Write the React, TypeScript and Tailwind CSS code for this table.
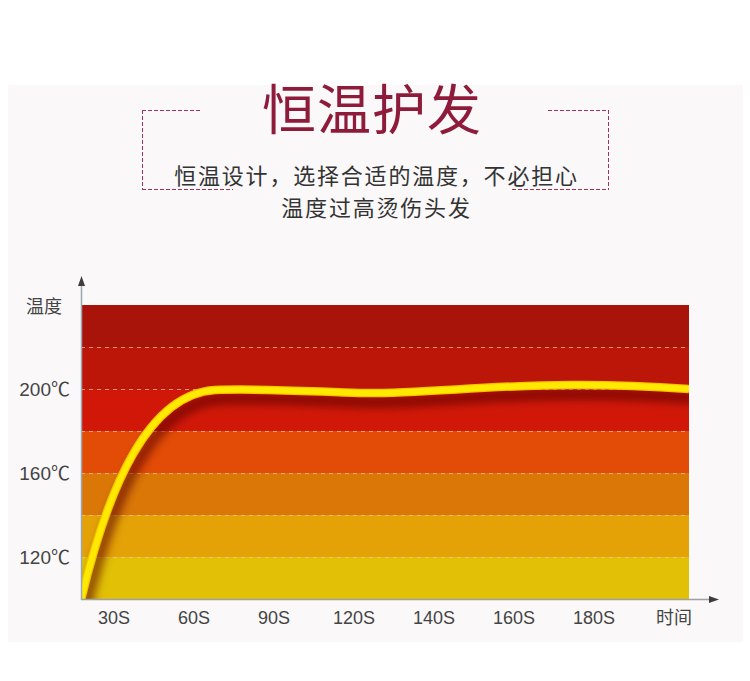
import React from "react";

const bands = ["#a9140a", "#bc1608", "#d11808", "#e24c06", "#da7707", "#e4a207", "#e2c006"];
const xLabels = ["30S", "60S", "90S", "120S", "140S", "160S", "180S", "时间"];

const curve =
  "M81 598 C108 485, 148 392, 215 388 C260 386, 320 390, 360 391 C420 392, 500 382, 580 383 C620 383, 660 385, 689 387";

function Chart() {
  const top = 303;
  const h = 42;
  return (
    <svg width="660" height="334" viewBox="74 270 660 334" className="block">
      <defs>
        <filter id="sh" x="-10%" y="-20%" width="120%" height="140%">
          <feGaussianBlur stdDeviation="4" />
        </filter>
        <clipPath id="plot">
          <rect x="81" y={top} width="608" height={h * 7} />
        </clipPath>
      </defs>
      {bands.map((c, i) => (
        <rect key={i} x="81" y={top + i * h} width="608" height={h} fill={c} />
      ))}
      {[1, 2, 3, 4, 5, 6].map((i) => (
        <line
          key={i}
          x1="81"
          x2="689"
          y1={top + i * h + 0.5}
          y2={top + i * h + 0.5}
          stroke="#f4c0a8"
          strokeOpacity="0.75"
          strokeWidth="1"
          strokeDasharray="4 4"
        />
      ))}
      <g clipPath="url(#plot)">
        <path d={curve} transform="translate(4 9)" fill="none" stroke="#5a0000" strokeOpacity="0.6" strokeWidth="12" filter="url(#sh)" />
        <path d={curve} fill="none" stroke="#f2c400" strokeWidth="8.5" strokeLinecap="butt" />
        <path d={curve} fill="none" stroke="#ffe900" strokeWidth="6" strokeLinecap="butt" />
      </g>
      {/* y axis */}
      <line x1="81.5" y1="282" x2="81.5" y2="598" stroke="#9aa6b0" strokeWidth="1.5" />
      <path d="M81.5 274 L78 284 L85 284 Z" fill="#3d3d3d" />
      {/* x axis */}
      <line x1="81" y1="597.5" x2="712" y2="597.5" stroke="#a0a0a0" strokeWidth="1.5" />
      <path d="M719 597.5 L709 594 L709 601 Z" fill="#3d3d3d" />
    </svg>
  );
}

function Dash({ className }: { className: string }) {
  return <div className={"absolute " + className} />;
}

export default function App() {
  const font = { fontFamily: '"Liberation Sans", "Noto Sans CJK SC", sans-serif' };
  return (
    <div className="w-[750px] h-[681px] bg-white" style={font}>
      <div className="h-[85px]" />
      <div className="mx-[8px] w-[735px] h-[557px] bg-[#faf8f9] flex flex-col">
        {/* header */}
        <div className="relative w-[467px] mx-auto flex flex-col items-center">
          <Dash className="left-0 top-[25px] w-[60px] h-px bg-[repeating-linear-gradient(90deg,#a23350_0_4px,transparent_4px_6px)]" />
          <Dash className="right-0 top-[25px] w-[61px] h-px bg-[repeating-linear-gradient(90deg,#a23350_0_4px,transparent_4px_6px)]" />
          <Dash className="left-0 top-[25px] w-px h-[80px] bg-[repeating-linear-gradient(180deg,#a23350_0_4px,transparent_4px_6px)]" />
          <Dash className="right-0 top-[25px] w-px h-[80px] bg-[repeating-linear-gradient(180deg,#a23350_0_4px,transparent_4px_6px)]" />
          <Dash className="left-0 top-[104px] w-[91px] h-px bg-[repeating-linear-gradient(90deg,#a23350_0_4px,transparent_4px_6px)]" />
          <Dash className="right-0 top-[104px] w-[97px] h-px bg-[repeating-linear-gradient(90deg,#a23350_0_4px,transparent_4px_6px)]" />
          <div className="-mt-[1px] h-[56px] text-[54px] leading-[54px] tracking-[1px] pr-[7px] text-[#8e1b3a] whitespace-nowrap">
            恒温护发
          </div>
          <div className="mt-[21px] text-[22px] leading-[32px] tracking-[1.8px] pl-[2px] text-[#333333] text-center whitespace-nowrap">
            <div>恒温设计，选择合适的温度，不必担心</div>
            <div>温度过高烫伤头发</div>
          </div>
        </div>
        {/* chart */}
        <div className="mt-[47px] flex flex-row">
          <div className="w-[66px] flex flex-col text-[19px] leading-[24px] text-[#444444]">
            <div className="mt-[23px] pr-[12px] text-right text-[18px]">温度</div>
            <div className="mt-[59px] pr-[4px] text-right">200℃</div>
            <div className="mt-[60px] pr-[4px] text-right">160℃</div>
            <div className="mt-[60px] pr-[4px] text-right">120℃</div>
          </div>
          <Chart />
        </div>
        <div className="ml-[66px] grid grid-cols-[repeat(8,80px)] text-[18px] leading-[24px] text-[#444444]">
          {xLabels.map((l) => (
            <div key={l} className="text-center">
              {l}
            </div>
          ))}
        </div>
      </div>
    </div>
  );
}
